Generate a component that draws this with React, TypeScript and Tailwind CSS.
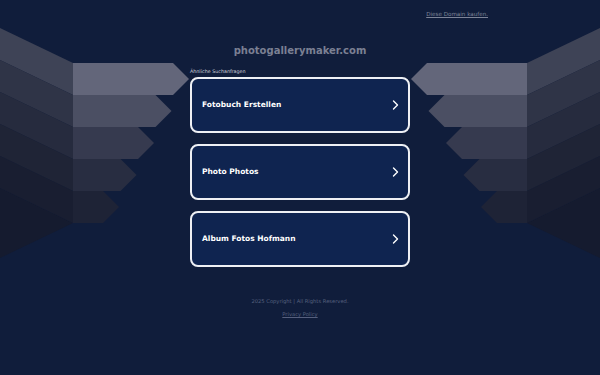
const FRONT = ['#63667a', '#4b4f63', '#363a4f', '#282d41', '#1e2336'];
const SIDE = ['#3e4356', '#2f3447', '#262b3e', '#1f2436', '#191e31'];

const SEARCHES = ['Fotobuch Erstellen', 'Photo Photos', 'Album Fotos Hofmann'];

// One half of the stacked-slat backdrop; the right half is the same group mirrored.
function Slats() {
  return (
    <g>
      <polygon points="0,188 73,223 0,258" fill="#151b2f" />
      {SIDE.map((c, k) => (
        <polygon key={`s${k}`} points={`0,${28 + 32 * k} 73,${63 + 32 * k} 73,${95 + 32 * k} 0,${60 + 32 * k}`} fill={c} />
      ))}
      {FRONT.map((c, k) => {
        const y0 = 63 + 32 * k;
        const tip = 189 - 17.5 * k;
        return (
          <polygon
            key={`f${k}`}
            points={`73,${y0} ${tip - 16},${y0} ${tip},${y0 + 16} ${tip - 16},${y0 + 32} 73,${y0 + 32}`}
            fill={c}
          />
        );
      })}
    </g>
  );
}

function Chevron() {
  return (
    <svg width="7" height="10" viewBox="0 0 7 10" fill="none">
      <path d="M1.5 1 L5.5 5 L1.5 9" stroke="#ffffff" strokeWidth="1.4" strokeLinecap="round" strokeLinejoin="round" />
    </svg>
  );
}

export default function App() {
  return (
    <div
      className="relative h-[375px] w-full overflow-hidden bg-[#101d3b]"
      style={{ fontFamily: '"DejaVu Sans", Verdana, sans-serif' }}
    >
      <svg className="absolute inset-0" width="600" height="375" viewBox="0 0 600 375">
        <Slats />
        <g transform="translate(600,0) scale(-1,1)">
          <Slats />
        </g>
      </svg>

      <div className="relative flex flex-col items-center">
        <div className="flex w-full justify-end pr-[112px] pt-[11px]">
          <a className="text-[5.6px] leading-[7px] text-[#7d8498] underline">Diese Domain kaufen.</a>
        </div>

        <h1 className="mt-[26px] text-[10px] font-bold leading-[13px] text-[#7b8093]">photogallerymaker.com</h1>

        <div className="mt-[12px] flex w-[220px] flex-col">
          <span className="text-[4.8px] leading-[6px] text-[#d0d3dc]">Ähnliche Suchanfragen</span>
          <div className="mt-[2px] flex flex-col gap-[11px]">
            {SEARCHES.map(s => (
              <div
                key={s}
                className="flex h-[56px] items-center justify-between rounded-[8px] border-2 border-[#eef0f5] bg-[#0f2450] pl-[10px] pr-[9px]"
              >
                <span className="text-[7.5px] font-bold text-white">{s}</span>
                <Chevron />
              </div>
            ))}
          </div>
        </div>

        <p className="mt-[31px] text-[5.2px] leading-[6px] text-[#56607e]">2025 Copyright | All Rights Reserved.</p>
        <a className="mt-[7px] text-[5.2px] leading-[6px] text-[#56607e] underline">Privacy Policy</a>
      </div>
    </div>
  );
}
